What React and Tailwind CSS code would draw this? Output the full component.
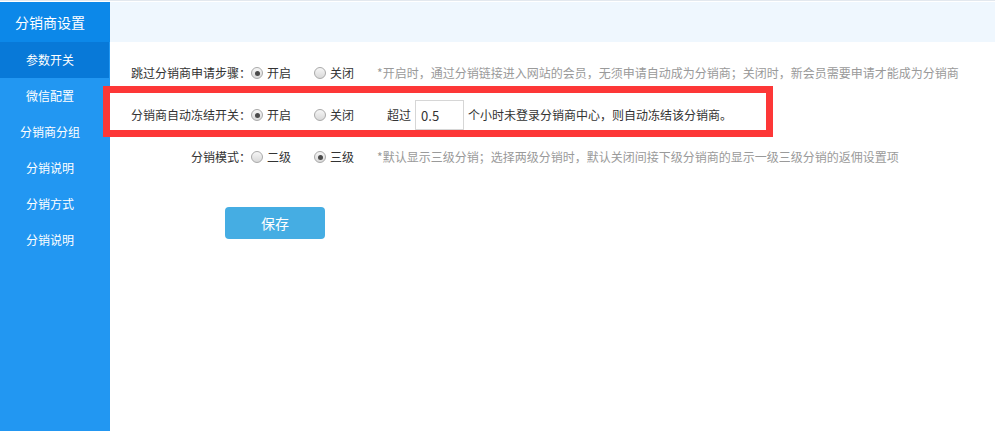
import React from "react";

const font = { fontFamily: '"Noto Sans CJK SC", "Noto Sans", sans-serif' };

function Radio({ checked, label }) {
  return (
    <span className="flex items-center">
      <span className="flex h-[12px] w-[12px] items-center justify-center rounded-full border border-[#a9a9a9] bg-gradient-to-b from-[#f6f6f6] to-[#d9d9d9]">
        {checked && <span className="h-[5px] w-[5px] rounded-full bg-[#4a4a4a]" />}
      </span>
      <span className="ml-[4px] text-[12px] text-[#333]">{label}</span>
    </span>
  );
}

function Row({ label, children }) {
  return (
    <div className="flex h-[42px] items-center">
      <div className="w-[121px] text-right text-[12px] text-[#333]">{label}</div>
      {children}
    </div>
  );
}

export default function App() {
  const items = ["参数开关", "微信配置", "分销商分组", "分销说明", "分销方式", "分销说明"];
  return (
    <div className="relative flex h-[431px] w-[995px] flex-col overflow-hidden bg-white" style={font}>
      <div className="h-[2px] border-t border-[#e3e8ee] bg-white" />
      <div className="flex flex-1">
        <div className="flex w-[110px] flex-col bg-[#2297f2]">
          <div className="flex h-[40px] items-center justify-center bg-[#0c88e9] pr-[10px] text-[14px] text-white">
            分销商设置
          </div>
          {items.map((t, i) => (
            <div
              key={i}
              className={
                i === 0
                  ? "mr-[1px] flex h-[36px] items-center justify-center bg-[#0879d8] pr-[9px] text-[12px] text-white"
                  : "flex h-[36px] items-center justify-center pr-[10px] text-[12px] text-white"
              }
            >
              {t}
            </div>
          ))}
        </div>
        <div className="flex flex-1 flex-col">
          <div className="h-[40px] bg-[#eff7fe]" />
          <div className="flex flex-col pl-[20px] pt-[10px]">
            <Row label="跳过分销商申请步骤：">
              <Radio checked label="开启" />
              <span className="ml-[23px]">
                <Radio label="关闭" />
              </span>
              <span className="ml-[23px] text-[12px] text-[#9a9a9a]">
                *开启时，通过分销链接进入网站的会员，无须申请自动成为分销商；关闭时，新会员需要申请才能成为分销商
              </span>
            </Row>
            <Row label="分销商自动冻结开关：">
              <Radio checked label="开启" />
              <span className="ml-[23px]">
                <Radio label="关闭" />
              </span>
              <span className="ml-[33px] text-[12px] text-[#333]">超过</span>
              <input
                defaultValue="0.5"
                className="ml-[4px] h-[30px] w-[49px] border border-[#d6d6d6] px-[5px] text-[13px] text-[#333] outline-none"
                style={font}
              />
              <span className="ml-[4px] text-[12px] text-[#333]">
                个小时未登录分销商中心，则自动冻结该分销商。
              </span>
            </Row>
            <Row label="分销模式：">
              <Radio label="二级" />
              <span className="ml-[23px]">
                <Radio checked label="三级" />
              </span>
              <span className="ml-[23px] text-[12px] text-[#9a9a9a]">
                *默认显示三级分销；选择两级分销时，默认关闭间接下级分销商的显示一级三级分销的返佣设置项
              </span>
            </Row>
            <div className="mt-[29px] pl-[95px]">
              <button className="flex h-[32px] w-[100px] items-center justify-center rounded-[4px] bg-[#45ade3] text-[14px] text-white">
                保存
              </button>
            </div>
          </div>
        </div>
      </div>
      <div className="pointer-events-none absolute left-[103px] top-[86px] h-[51px] w-[670px] border-[7px] border-[#fd3737]" />
    </div>
  );
}
